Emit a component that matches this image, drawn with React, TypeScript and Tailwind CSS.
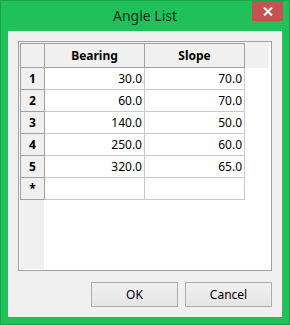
const rows = [
  ["1", "30.0", "70.0"],
  ["2", "60.0", "70.0"],
  ["3", "140.0", "50.0"],
  ["4", "250.0", "60.0"],
  ["5", "320.0", "65.0"],
  ["*", "", ""],
];

export default function App() {
  return (
    <div className="flex h-[325px] w-[290px] flex-col border border-[#17a548] bg-[#21c15a] font-['Noto_Sans',sans-serif] text-[12px] text-black">
      {/* Title bar */}
      <div className="relative flex h-[30px] shrink-0 items-center justify-center">
        <span className="text-[14px] leading-none text-[#142f20]">Angle List</span>
        <div className="absolute right-[6px] top-0 flex h-[20px] w-[31px] items-center justify-center bg-[#c75050]">
          <svg width="10" height="9" viewBox="0 0 10 9">
            <path d="M1 0.5 L9 8.5 M9 0.5 L1 8.5" stroke="white" strokeWidth="2" />
          </svg>
        </div>
      </div>

      {/* Client area */}
      <div className="mx-[7px] flex h-[286px] flex-col bg-[#f0f0f0] px-[10px] pt-[10px]">
        {/* Grid */}
        <div className="flex h-[230px] w-[254px] flex-col border border-[#a0a0a0] bg-white">
          <div className="flex h-[26px] shrink-0 pr-[2px]">
            <div className="flex flex-1 bg-[#f0f0f0] pl-px pt-px">
              <div className="h-[25px] w-[25px] border border-[#a0a0a0]" />
              <div className="flex h-[25px] w-[100px] items-center justify-center border-y border-r border-[#a0a0a0] font-bold">
                Bearing
              </div>
              <div className="flex h-[25px] w-[100px] items-center justify-center border-y border-r border-[#a0a0a0] font-bold">
                Slope
              </div>
            </div>
          </div>
          {rows.map((r) => (
            <div key={r[0]} className="flex h-[22px] shrink-0 pl-px">
              <div className="flex w-[25px] items-center justify-center border-x border-b border-[#a0a0a0] bg-[#f0f0f0] font-bold">
                {r[0]}
              </div>
              <div className="flex w-[100px] items-center justify-end border-b border-r border-[#c8c8c8] pr-[2px]">
                {r[1]}
              </div>
              <div className="flex w-[100px] items-center justify-end border-b border-r border-[#c8c8c8] pr-[2px]">
                {r[2]}
              </div>
            </div>
          ))}
          <div className="flex flex-1 pb-px pl-px">
            <div className="w-[24px] bg-[#f0f0f0]" />
          </div>
        </div>

        {/* Buttons */}
        <div className="mt-[11px] flex justify-end gap-[7px]">
          <button className="h-[25px] w-[87px] border border-[#adadad] bg-gradient-to-b from-[#f0f0f0] to-[#e5e5e5] text-[12px]">
            OK
          </button>
          <button className="h-[25px] w-[87px] border border-[#adadad] bg-gradient-to-b from-[#f0f0f0] to-[#e5e5e5] text-[12px]">
            Cancel
          </button>
        </div>
      </div>
    </div>
  );
}
